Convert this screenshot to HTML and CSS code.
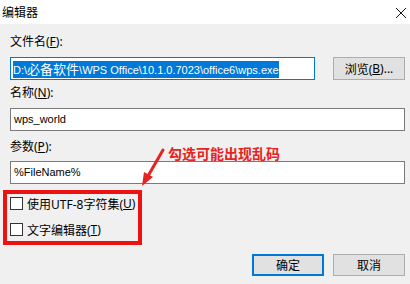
FILE: index.html
```html
<!DOCTYPE html>
<html>
<head>
<meta charset="utf-8" />
<title>编辑器</title>
<link rel="stylesheet" href="styles.css">
</head>
<body>
<div class="dlg">
	<div class="titlebar">
		<span class="title">编辑器</span>
		<svg class="close" width="12" height="12" viewBox="0 0 12 12"><path d="M1 1L11 11M11 1L1 11" stroke="#111" stroke-width="1"/></svg>
	</div>
	<div class="main">
		<div class="lbl lbl1">文件名(<u>F</u>):</div>
		<div class="row">
			<div class="field field_path"><span class="sel">D:\<span class="cjk">必备软件</span>\WPS Office\10.1.0.7023\office6\wps.exe</span></div>
			<a class="btn btn_browse" href="javascript:;">浏览(<u>B</u>)...</a>
		</div>
		<div class="lbl lbl2">名称(<u>N</u>):</div>
		<div class="field field_name">wps_world</div>
		<div class="lbl lbl3">参数(<u>P</u>):</div>
		<div class="field field_args">%FileName%</div>
		<div class="checks">
			<label class="chk"><span class="box"></span>使用UTF-8字符集(<u>U</u>)</label>
			<label class="chk chk2"><span class="box"></span>文字编辑器(<u>T</u>)</label>
		</div>
		<div class="btns">
			<a class="btn btn_ok" href="javascript:;">确定</a>
			<a class="btn" href="javascript:;">取消</a>
		</div>
	</div>
	<div class="note">勾选可能出现乱码</div>
	<svg class="arrow" width="36" height="46" viewBox="0 0 36 46"><path d="M28 5L13 31" stroke="#e62222" stroke-width="3" stroke-linecap="round"/><path d="M7 41L9 27L18 32Z" fill="#e62222"/></svg>
</div>
</body>
</html>
```

FILE: styles.css
```css
*{margin:0;padding:0;box-sizing:border-box;}
html,body{width:410px;height:284px;overflow:hidden;}
body{background:#f0f0f0;font-family:"Noto Sans","Noto Sans CJK SC",sans-serif;font-size:12px;color:#000;}
u{text-decoration:underline;}
a{color:#000;text-decoration:none;}

.dlg{position:relative;height:284px;}
.titlebar{height:24px;background:#fff;display:flex;align-items:center;justify-content:space-between;padding:0 3px 0 2px;}
.title{line-height:17px;}
.close{display:block;margin-top:1px;}

.main{padding:0 5px 0 10px;}
.lbl{line-height:17px;height:17px;}
.lbl1{margin-top:9px;}
.lbl2{margin-top:4px;}
.lbl3{margin-top:7px;}

.row{display:flex;margin-top:7px;}
.field{height:23px;background:#fff;border:1px solid #7a7a7a;line-height:21px;padding-left:3px;white-space:nowrap;overflow:hidden;font-family:"Liberation Sans","Noto Sans CJK SC",sans-serif;font-size:11px;}
.field_path{width:305px;border-color:#0078d7;padding-left:2px;}
.sel{background:#0078d7;color:#fff;display:inline-block;line-height:16px;vertical-align:middle;}
.cjk{font-family:"Noto Sans CJK SC",sans-serif;font-size:13px;}
.field_name{margin-top:7px;}
.field_args{margin-top:6px;}

.btn{display:flex;align-items:center;justify-content:center;width:72px;height:22px;background:#e1e1e1;border:1px solid #adadad;}
.btn_browse{margin-left:18px;height:23px;}
.btn_ok{border:2px solid #0078d7;}

.checks{margin:6px 0 0 -7px;width:139px;border:4px solid #ee1111;padding:0 0 2px 3px;}
.chk{display:flex;align-items:center;height:19px;}
.chk2{margin-top:7px;}
.box{width:13px;height:13px;border:1px solid #333;background:#fff;margin-right:4px;}

.btns{display:flex;justify-content:flex-end;gap:9px;margin-top:9px;}

.note{position:absolute;left:168px;top:144px;color:#e62222;font-weight:bold;font-size:14px;line-height:20px;}
.arrow{position:absolute;left:135px;top:145px;}
```
